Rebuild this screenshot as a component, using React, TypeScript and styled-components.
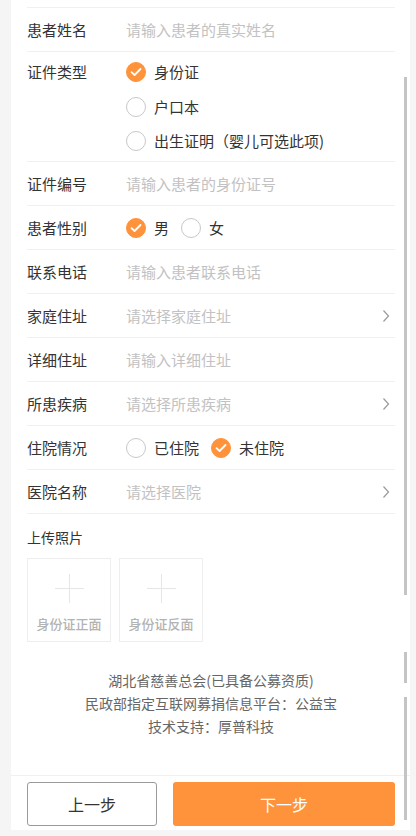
import React from 'react';
import styled, {createGlobalStyle} from 'styled-components';

const GlobalStyle = createGlobalStyle`
  html, body {
    margin: 0;
    padding: 0;
    background: #f5f5f5;
    font-family: "Noto Sans CJK SC", "Liberation Sans", sans-serif;
  }
  * {
    box-sizing: border-box;
  }
`;

const ORANGE = '#ff933b';

type Field = {label: string; placeholder: string; arrow?: boolean};

const Radio = ({checked}: {checked?: boolean}) => (
  <RadioDot $checked={checked}>
    {checked && (
      <svg width="12" height="10" viewBox="0 0 12 10">
        <path d="M1.5 5.2 L4.6 8 L10.5 2" fill="none" stroke="#fff" strokeWidth="1.8" strokeLinecap="round" strokeLinejoin="round" />
      </svg>
    )}
  </RadioDot>
);

const Chevron = () => (
  <ChevronIcon width="8" height="14" viewBox="0 0 8 14">
    <path d="M1.5 1.5 L6.5 7 L1.5 12.5" fill="none" stroke="#9a9a9a" strokeWidth="1.2" />
  </ChevronIcon>
);

const InputRow = ({label, placeholder, arrow}: Field) => (
  <Row>
    <Label>{label}</Label>
    <Placeholder>{placeholder}</Placeholder>
    {arrow && <Chevron />}
  </Row>
);

export default function App() {
  return (
    <Page>
      <GlobalStyle />
      <Panel>
        <TopStub />
        <InputRow label="患者姓名" placeholder="请输入患者的真实姓名" />
        <Row $top>
          <Label>证件类型</Label>
          <OptionStack>
            <Option><Radio checked />身份证</Option>
            <Option><Radio />户口本</Option>
            <Option><Radio />出生证明（婴儿可选此项)</Option>
          </OptionStack>
        </Row>
        <InputRow label="证件编号" placeholder="请输入患者的身份证号" />
        <Row>
          <Label>患者性别</Label>
          <OptionLine>
            <Option><Radio checked />男</Option>
            <Option><Radio />女</Option>
          </OptionLine>
        </Row>
        <InputRow label="联系电话" placeholder="请输入患者联系电话" />
        <InputRow label="家庭住址" placeholder="请选择家庭住址" arrow />
        <InputRow label="详细住址" placeholder="请输入详细住址" />
        <InputRow label="所患疾病" placeholder="请选择所患疾病" arrow />
        <Row>
          <Label>住院情况</Label>
          <OptionLine>
            <Option><Radio />已住院</Option>
            <Option><Radio checked />未住院</Option>
          </OptionLine>
        </Row>
        <InputRow label="医院名称" placeholder="请选择医院" arrow />

        <Upload>
          <UploadTitle>上传照片</UploadTitle>
          <UploadList>
            <UploadBox>
              <Plus />
              <UploadText>身份证正面</UploadText>
            </UploadBox>
            <UploadBox>
              <Plus />
              <UploadText>身份证反面</UploadText>
            </UploadBox>
          </UploadList>
        </Upload>

        <Credits>
          <div>湖北省慈善总会(已具备公募资质)</div>
          <div>民政部指定互联网募捐信息平台：公益宝</div>
          <div>技术支持：厚普科技</div>
        </Credits>

        <Spacer />

        <ActionBar>
          <PrevButton>上一步</PrevButton>
          <NextButton>下一步</NextButton>
        </ActionBar>
      </Panel>

      <ScrollSeg $top={77} $height={518} />
      <ScrollSeg $top={652} $height={31} />
      <ScrollSeg $top={697} $height={123} />
    </Page>
  );
}

const Page = styled.div`
  position: relative;
  height: 836px;
  padding: 0 6px 6px 11px;
`;

const Panel = styled.div`
  display: flex;
  flex-direction: column;
  height: 830px;
  padding: 0 15px 0 16px;
  background: #fff;
`;

const TopStub = styled.div`
  height: 8px;
  border-bottom: 1px solid #f0f0f0;
  flex-shrink: 0;
`;

const Row = styled.div<{$top?: boolean}>`
  display: flex;
  align-items: ${p => (p.$top ? 'flex-start' : 'center')};
  min-height: 44px;
  padding: ${p => (p.$top ? '10px 0' : '0')};
  border-bottom: 1px solid #f0f0f0;
  font-size: 15px;
  flex-shrink: 0;
`;

const Label = styled.div`
  width: 99px;
  flex-shrink: 0;
  line-height: 20px;
  color: #333;
`;

const Placeholder = styled.div`
  flex: 1;
  color: #c2c2c2;
  line-height: 20px;
`;

const ChevronIcon = styled.svg`
  margin-right: 5px;
  flex-shrink: 0;
`;

const OptionStack = styled.div`
  display: flex;
  flex-direction: column;
  gap: 14.5px;
`;

const OptionLine = styled.div`
  display: flex;
  gap: 12px;
`;

const Option = styled.div`
  display: flex;
  align-items: center;
  gap: 8px;
  line-height: 20px;
  color: #333;
`;

const RadioDot = styled.span<{$checked?: boolean}>`
  display: inline-flex;
  align-items: center;
  justify-content: center;
  width: 20px;
  height: 20px;
  border-radius: 50%;
  background: ${p => (p.$checked ? ORANGE : '#fff')};
  border: 1px solid ${p => (p.$checked ? ORANGE : '#c8c8c8')};
`;

const Upload = styled.div`
  padding-top: 13px;
  flex-shrink: 0;
`;

const UploadTitle = styled.div`
  font-size: 14px;
  line-height: 20px;
  color: #333;
`;

const UploadList = styled.div`
  display: flex;
  gap: 8px;
  margin-top: 11px;
`;

const UploadBox = styled.div`
  display: flex;
  flex-direction: column;
  align-items: center;
  width: 84px;
  height: 84px;
  border: 1px solid #eeeeee;
  padding-top: 15px;
`;

const Plus = styled.div`
  position: relative;
  width: 29px;
  height: 29px;

  &::before,
  &::after {
    content: '';
    position: absolute;
    background: #e6e6e6;
  }
  &::before {
    left: 0;
    right: 0;
    top: 14px;
    height: 1px;
  }
  &::after {
    top: 0;
    bottom: 0;
    left: 14px;
    width: 1px;
  }
`;

const UploadText = styled.div`
  margin-top: 12px;
  font-size: 13px;
  line-height: 18px;
  font-weight: 500;
  color: #b3b3b3;
`;

const Credits = styled.div`
  margin-top: 27px;
  text-align: center;
  font-size: 14px;
  line-height: 23px;
  color: #666;
  flex-shrink: 0;
`;

const Spacer = styled.div`
  flex: 1;
`;

const ActionBar = styled.div`
  display: flex;
  gap: 16px;
  margin: 0 -15px 0 -16px;
  padding: 6px 15px 4px 16px;
  border-top: 1px solid #f0f0f0;
`;

const PrevButton = styled.button`
  width: 130px;
  height: 44px;
  border: 1px solid #9a9a9a;
  border-radius: 3px;
  background: #fff;
  color: #333;
  font-family: inherit;
  font-size: 16px;
`;

const NextButton = styled.button`
  flex: 1;
  height: 44px;
  border: none;
  border-radius: 3px;
  background: ${ORANGE};
  color: #fff;
  font-family: inherit;
  font-size: 16px;
`;

const ScrollSeg = styled.div<{$top: number; $height: number}>`
  position: absolute;
  left: 404px;
  width: 3px;
  top: ${p => p.$top}px;
  height: ${p => p.$height}px;
  background: #c4c4c4;
`;
